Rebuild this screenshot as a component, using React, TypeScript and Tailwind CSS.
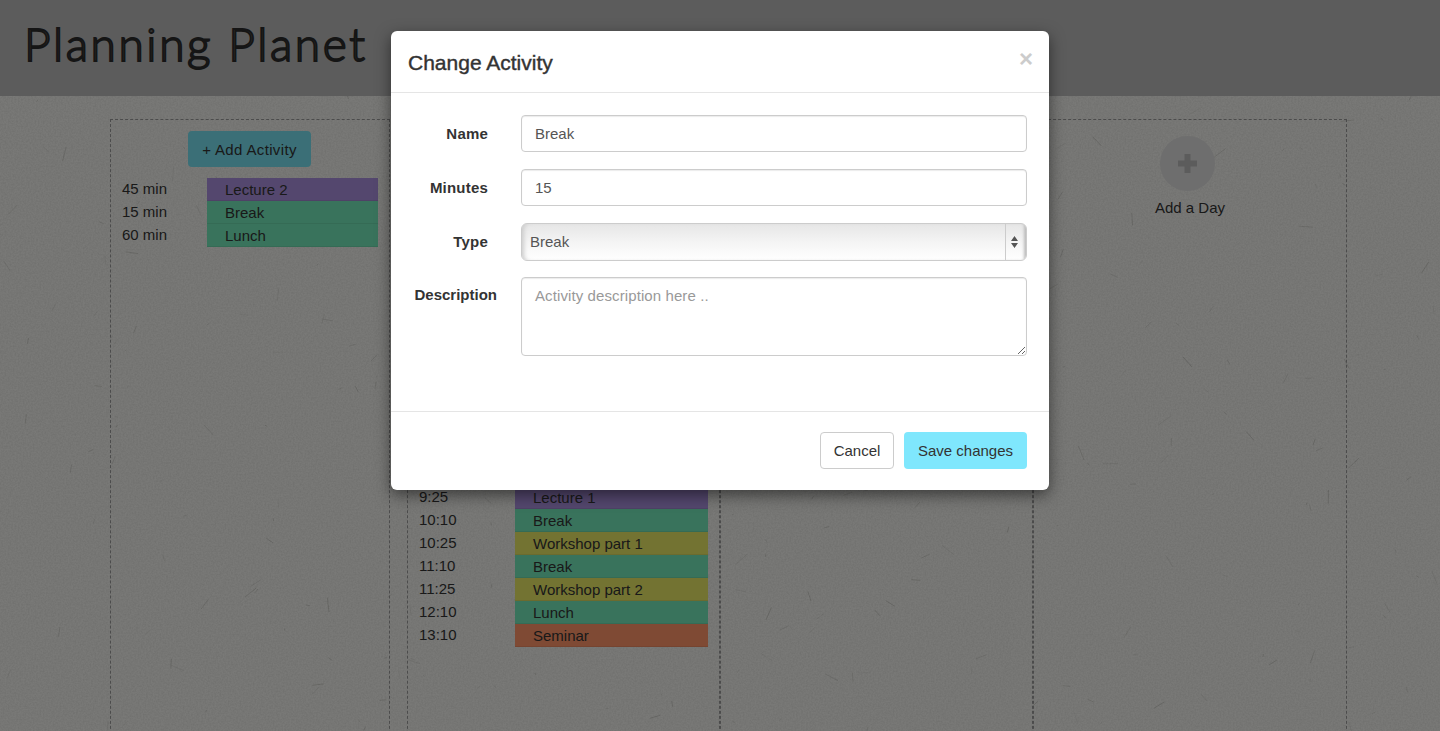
const queued = [
  { time: "45 min", name: "Lecture 2", tone: "purple" },
  { time: "15 min", name: "Break", tone: "green" },
  { time: "60 min", name: "Lunch", tone: "green" },
];

const day = [
  { time: "9:25", name: "Lecture 1", tone: "purple" },
  { time: "10:10", name: "Break", tone: "green" },
  { time: "10:25", name: "Workshop part 1", tone: "yellow" },
  { time: "11:10", name: "Break", tone: "green" },
  { time: "11:25", name: "Workshop part 2", tone: "yellow" },
  { time: "12:10", name: "Lunch", tone: "green" },
  { time: "13:10", name: "Seminar", tone: "orange" },
];

const toneClass: Record<string, string> = {
  purple: "bg-[#a88fdc] border-[#9c85cd]",
  green: "bg-[#73e6b8] border-[#6ad6aa]",
  yellow: "bg-[#e6e665] border-[#d6d65e]",
  orange: "bg-[#ff9468] border-[#ec8960]",
};

// paper fibres, seeded so every render gives the same sheet
const fibres = Array.from({ length: 320 }, (_, i) => {
  const r = (n: number) => {
    const v = Math.sin((i + 1) * 12.9898 + n * 78.233) * 43758.5453;
    return v - Math.floor(v);
  };
  const angle = r(3) * Math.PI * 2;
  const len = 2 + r(4) * r(4) * 14;
  const x = r(1) * 1440;
  const y = r(2) * 640;
  return { x, y, x2: x + Math.cos(angle) * len, y2: y + Math.sin(angle) * len, o: 0.08 + r(5) * 0.2 };
});

function Paper() {
  return (
    <svg className="absolute left-0 top-[96px]" width="1440" height="635">
      <filter id="grain">
        <feTurbulence type="fractalNoise" baseFrequency="0.6" numOctaves="2" seed="4" />
        <feColorMatrix values="0 0 0 0 0.4  0 0 0 0 0.4  0 0 0 0 0.38  0 0 0 0.4 -0.12" />
      </filter>
      <rect width="1440" height="635" filter="url(#grain)" />
      {fibres.map((f, i) => (
        <line key={i} x1={f.x} y1={f.y} x2={f.x2} y2={f.y2} stroke="#77776f" strokeOpacity={f.o} strokeWidth="1" />
      ))}
    </svg>
  );
}

function Row({ item, timeClass, blockClass }: { item: (typeof day)[number]; timeClass: string; blockClass: string }) {
  return (
    <div className="flex h-[23px] items-center">
      <span className={`shrink-0 ${timeClass}`}>{item.time}</span>
      <div className={`flex h-[23px] items-center border-b pl-[18px] pt-[2px] ${toneClass[item.tone]} ${blockClass}`}>
        {item.name}
      </div>
    </div>
  );
}

function Field({ label, children, labelClass = "tracking-[0.2px]", className = "" }: { label: string; children: React.ReactNode; labelClass?: string; className?: string }) {
  return (
    <div className={`flex items-start gap-[33px] ${className}`}>
      <div className="flex h-[37px] w-[80px] shrink-0 items-center justify-end pt-[1px]">
        <label className={`font-bold text-[#333] ${labelClass}`}>{label}</label>
      </div>
      {children}
    </div>
  );
}

const inputClass =
  "h-[37px] w-[506px] rounded border border-[#ccc] bg-white px-[13px] text-[#555] shadow-[inset_0_1px_1px_rgba(0,0,0,0.08)] outline-none";

export default function App() {
  return (
    <div className="relative h-[731px] overflow-hidden bg-[#f2f2ee] font-['Liberation_Sans',Arial,sans-serif] text-[15px] text-[#333]">
      <header className="flex h-[96px] items-start bg-[#b8b8b8] pl-[24px] pt-[15px]">
        <h1 className="font-['Lato',sans-serif] text-[46px] leading-[58px] font-light tracking-[2.6px] text-[#666] [-webkit-text-stroke:1.8px_#2a2a2a]">
          Planning Planet
        </h1>
      </header>

      <Paper />

      <main className="relative flex pl-[110px] pt-[23px]">
        <section className="h-[640px] w-[280px] border border-dashed border-[#999] pl-[11px]">
          <div className="ml-[66px] mt-[11px] flex h-[36px] w-[123px] items-center justify-center rounded bg-[#76dfee] pt-[2px] tracking-[0.35px]">
            + Add Activity
          </div>
          <div className="mt-[11px]">
            {queued.map((item) => (
              <Row key={item.time} item={item} timeClass="w-[85px]" blockClass="w-[171px]" />
            ))}
          </div>
        </section>
        <section className="ml-[17px] h-[640px] w-[313px] border border-dashed border-[#999] pl-[11px] pt-[366px]">
          {day.map((item) => (
            <Row key={item.time} item={item} timeClass="w-[96px]" blockClass="w-[193px]" />
          ))}
        </section>
        <section className="h-[640px] w-[313px] border border-dashed border-[#999]" />
        <section className="flex h-[640px] w-[314px] flex-col items-center border border-dashed border-[#999] pt-[16px]">
          <div className="mr-[5px] flex h-[55px] w-[55px] items-center justify-center rounded-full bg-[#dcdcdc]">
            <svg width="19" height="19" viewBox="0 0 19 19">
              <path d="M6.5 0h6v6.5H19v6h-6.5V19h-6v-6.5H0v-6h6.5z" fill="#b8b8b8" />
            </svg>
          </div>
          <span className="mt-[6px]">Add a Day</span>
        </section>
      </main>

      <div className="absolute inset-0 bg-[rgba(0,0,0,0.5)]" />

      <div className="absolute left-[391px] top-[31px] h-[459px] w-[658px] rounded-md bg-white shadow-[0_5px_15px_rgba(0,0,0,0.5)]">
        <div className="relative h-[62px] border-b border-[#e5e5e5] pl-[17px] pt-[18px]">
          <h4 className="text-[21px] leading-[28px] text-[#333] [-webkit-text-stroke:0.4px_#333]">Change Activity</h4>
          <span className="absolute right-[16px] top-[14px] text-[24px] leading-[28px] font-bold text-[#ccc]">×</span>
        </div>

        <div className="flex h-[318px] flex-col gap-[17px] pl-[17px] pt-[22px]">
          <Field label="Name">
            <input readOnly value="Break" className={inputClass} />
          </Field>
          <Field label="Minutes">
            <input readOnly value="15" className={inputClass} />
          </Field>
          <Field label="Type">
            <div className="relative flex h-[38px] w-[506px] items-center overflow-hidden rounded-md border border-[#ccc] bg-gradient-to-b from-[#e6e6e6] via-[#f4f4f4] to-white pl-[8px] text-[#555] shadow-[inset_4px_0_4px_-2px_#ccc]">
              Break
              <div className="absolute bottom-0 right-0 top-0 flex w-[21px] items-center justify-center border-l border-[#ccc] pr-[3px] shadow-[inset_-4px_0_3px_-2px_#bbb]">
                <svg width="7" height="12" viewBox="0 0 7 12">
                  <path d="M3.5 0L7 5H0zM3.5 12L0 7h7z" fill="#555" />
                </svg>
              </div>
            </div>
          </Field>
          <Field label="Description" labelClass="mr-[-9px] mb-[1px]" className="mt-[-1px]">
            <textarea
              readOnly
              placeholder="Activity description here .."
              className="h-[79px] w-[506px] rounded border border-[#ccc] px-[13px] py-[7px] tracking-[0.1px] text-[#555] shadow-[inset_0_1px_1px_rgba(0,0,0,0.08)] outline-none placeholder:text-[#999]"
            />
          </Field>
        </div>

        <div className="flex justify-end gap-[10px] border-t border-[#e5e5e5] pr-[22px] pt-[20px]">
          <button className="h-[37px] w-[74px] rounded border border-[#ccc] bg-white pt-[2px] text-[#333]">Cancel</button>
          <button className="h-[37px] w-[123px] rounded bg-[#7fe7fd] pt-[2px] text-[#333]">Save changes</button>
        </div>
      </div>
    </div>
  );
}
